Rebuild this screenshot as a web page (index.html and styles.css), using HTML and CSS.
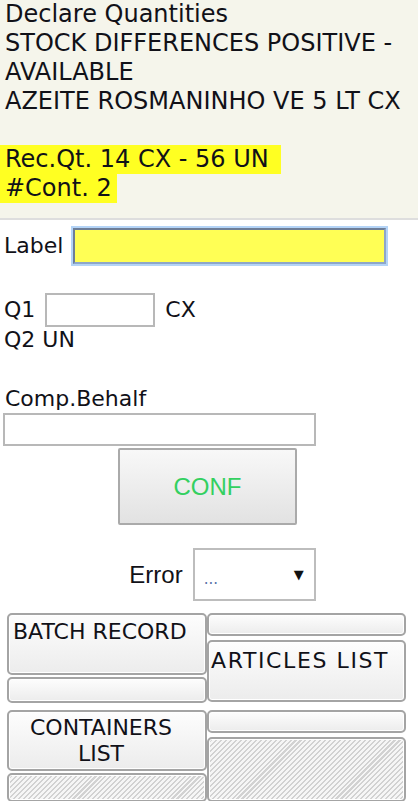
FILE: index.html
```html
<!DOCTYPE html>
<html lang="pt">
<head>
    <meta charset="UTF-8">
    <meta name="viewport" content="width=device-width, initial-scale=1">
    <title>Declare Quantities</title>
    <link rel="stylesheet" href="styles.css">
</head>
<body>

<div class="header">
    <div class="line">Declare Quantities</div>
    <div class="line">STOCK DIFFERENCES POSITIVE -</div>
    <div class="line">AVAILABLE</div>
    <div class="line">AZEITE ROSMANINHO VE 5 LT CX</div>
    <div class="line">&nbsp;</div>
    <div><span class="hl">Rec.Qt. 14 CX - 56 UN&nbsp;</span></div>
    <div><span class="hl">#Cont. 2</span></div>
</div>

<div class="form">
    <div class="row label-row">
        <label for="label">Label</label>
        <input type="text" id="label" class="input-label">
    </div>

    <div class="row q1-row">
        <label for="q1">Q1</label>
        <input type="text" id="q1" class="input-q">
        <span>CX</span>
    </div>
    <div class="q2">Q2 UN</div>

    <div class="comp-title">Comp.Behalf</div>
    <input type="text" class="input-comp">

    <div class="conf-wrap">
        <button class="conf-btn">CONF</button>
    </div>

    <div class="error-row">
        <span class="error-label">Error</span>
        <div class="select">
            <span class="select-value">...</span>
            <span class="select-arrow">&#9660;</span>
        </div>
    </div>
</div>

<div class="block">
    <div class="col col-left">
        <button class="tab tab-left">BATCH RECORD</button>
        <div class="strip"></div>
    </div>
    <div class="col col-right">
        <div class="strip strip-top"></div>
        <button class="tab tab-right">ARTICLES LIST</button>
    </div>
</div>

<div class="block block-2">
    <div class="col col-left">
        <button class="tab tab-center">CONTAINERS<br>LIST</button>
        <div class="strip hatched"></div>
    </div>
    <div class="col col-right">
        <div class="strip strip-top"></div>
        <div class="tab tab-empty hatched"></div>
    </div>
</div>

</body>
</html>
```

FILE: styles.css
```css
body {
    margin: 0;
    font-family: "DejaVu Sans", Verdana, sans-serif;
    color: #111118;
    background-color: #fff;
}

.header {
    background-color: #f5f5eb;
    border-bottom: 2px solid #dedede;
    font-size: 24px;
    line-height: 29px;
    padding-bottom: 15px;
}

.header .line {
    padding-left: 5px;
}

.hl {
    display: inline-block;
    background-color: #ffff22;
    padding: 0 5px;
}

.form {
    font-size: 22px;
    line-height: 26px;
}

.row {
    display: flex;
    align-items: center;
    gap: 10px;
    padding-left: 4px;
}

.label-row {
    margin-top: 8px;
}

.input-label {
    width: 313px;
    height: 36px;
    box-sizing: border-box;
    background-color: #ffff55;
    border: 2px solid #8ea6c8;
    border-top-color: #6d7e98;
    border-left-color: #6d7e98;
    box-shadow: 0 0 0 2px #b4d4f7;
    outline: none;
}

.q1-row {
    margin-top: 29px;
}

.input-q {
    width: 110px;
    height: 34px;
    box-sizing: border-box;
    border: 2px solid #b8b8b8;
}

.q2 {
    padding-left: 4px;
}

.comp-title {
    margin-top: 33px;
    padding-left: 5px;
}

.input-comp {
    display: block;
    margin: 1px 0 0 3px;
    width: 313px;
    height: 33px;
    box-sizing: border-box;
    border: 2px solid #b8b8b8;
}

.conf-wrap {
    display: flex;
    justify-content: center;
    padding-right: 3px;
    margin-top: 2px;
}

.conf-btn {
    width: 179px;
    height: 77px;
    font-family: "Liberation Sans", Arial, sans-serif;
    font-size: 24px;
    color: #33d060;
    background: linear-gradient(#f8f8f8, #e2e2e2);
    border: 2px solid #aaa;
    border-radius: 2px;
}

.error-row {
    display: flex;
    align-items: center;
    justify-content: center;
    gap: 10px;
    margin-top: 23px;
    padding-left: 27px;
}

.error-label {
    font-family: "Liberation Sans", Arial, sans-serif;
    font-size: 24px;
}

.select {
    width: 123px;
    height: 53px;
    box-sizing: border-box;
    border: 2px solid #bdbdbd;
    display: flex;
    align-items: center;
    justify-content: space-between;
    padding: 0 10px 0 9px;
}

.select-value {
    color: #5870a8;
    font-size: 15px;
    margin-top: 8px;
}

.select-arrow {
    font-size: 13px;
    color: #111;
}

.block {
    display: grid;
    grid-template-columns: 200px 199px;
    margin: 12px 0 0 7px;
    height: 90px;
}

.block-2 {
    margin-top: 7px;
    height: 91px;
}

.col {
    display: flex;
    flex-direction: column;
}

.col-left {
    gap: 2px;
}

.col-right {
    gap: 4px;
}

.tab,
.strip {
    box-sizing: border-box;
    border: 2px solid #a4a4a4;
    border-radius: 5px;
    background: linear-gradient(#fdfdfd, #ececec);
    box-shadow: inset 0 0 0 1px #fff;
    font-family: "DejaVu Sans", Verdana, sans-serif;
    font-size: 22px;
    line-height: 26px;
    color: #111118;
    padding: 0;
}

.tab {
    height: 62px;
    width: 100%;
    display: flex;
    align-items: flex-start;
}

.tab-left {
    padding: 4px 0 0 4px;
}

.tab-right {
    padding: 6px 0 0 2px;
    letter-spacing: 1.6px;
}

.tab-center {
    height: 61px;
    padding: 3px 12px 0 0;
    justify-content: center;
    text-align: center;
}

.strip {
    flex: 1;
}

.strip-top {
    flex: none;
    height: 23px;
}

.tab-empty {
    height: 65px;
}

.hatched {
    background: repeating-linear-gradient(135deg, #f6f6f6 0, #f6f6f6 2px, #d2d2d2 2px, #d2d2d2 3.5px);
}
```
